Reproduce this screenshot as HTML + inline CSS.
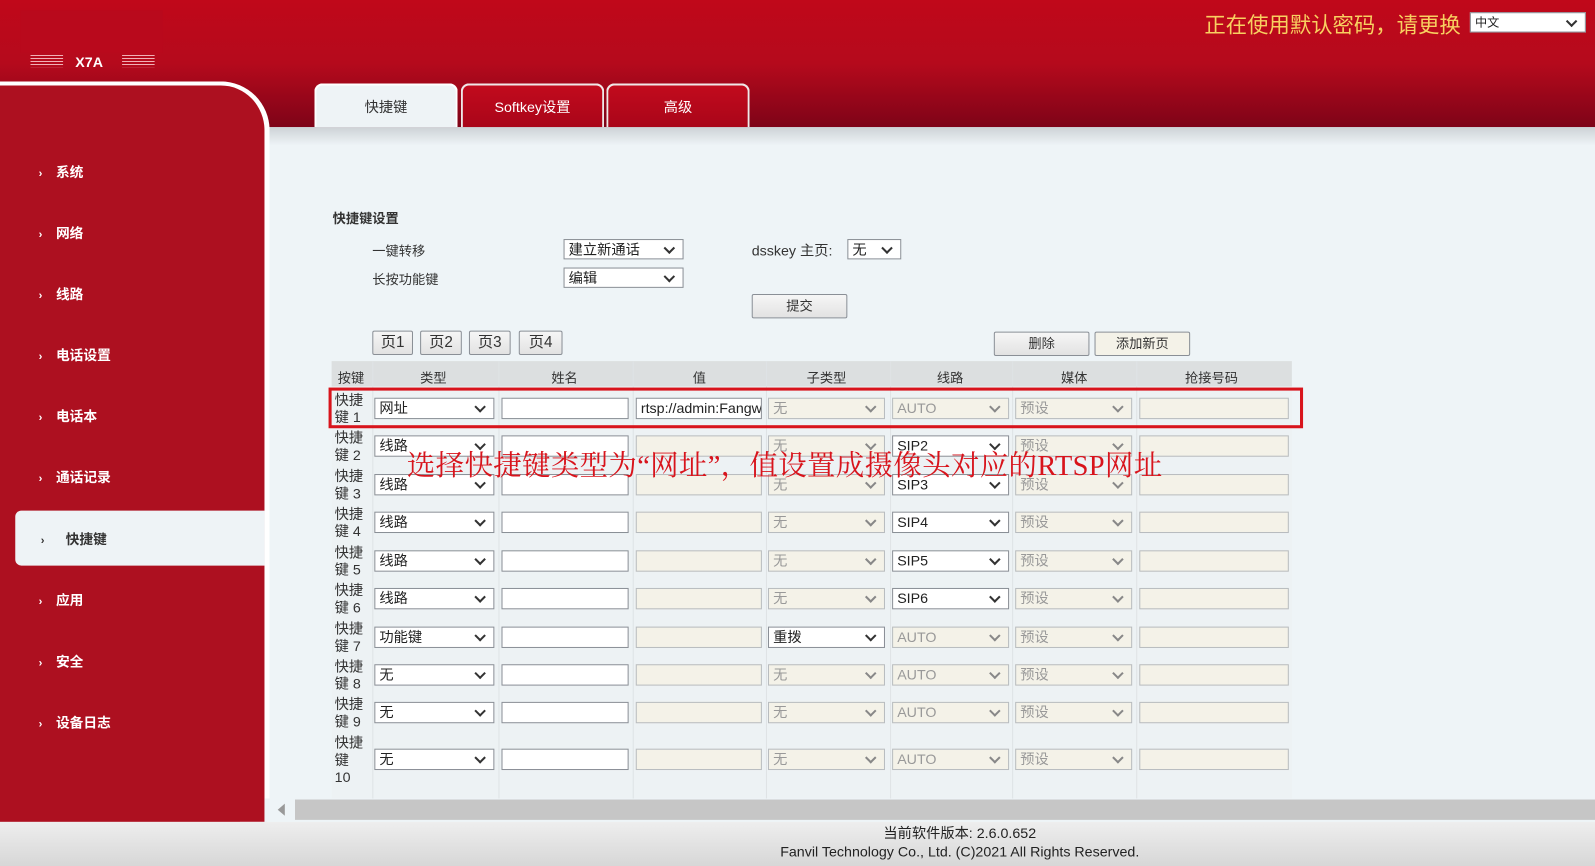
<!DOCTYPE html>
<html><head><meta charset="utf-8"><style>
*{margin:0;padding:0;box-sizing:border-box}
html,body{width:1595px;height:866px;overflow:hidden;background:#eef4f7}
#w{position:relative;width:1568px;height:852px;transform:scale(1.01722);transform-origin:0 0;font-family:"Liberation Sans","Noto Sans CJK SC",sans-serif;font-size:13px;color:#333;overflow:hidden}
.a{position:absolute}
.hdr{left:0;top:0;width:1568px;height:125px;background:linear-gradient(#c0081a 0%,#b50a1c 50%,#7e0318 100%)}
.shade{left:260px;top:125px;width:1335px;height:18px;background:linear-gradient(#cdd2d6,#eef4f7)}
.side{left:0;top:80px;width:265px;height:728px;background:#ad1020;border-top:4px solid #fff;border-right:5px solid #fff;border-top-right-radius:48px}
.nav{color:#fff;font-weight:bold;font-size:13.5px;left:38px}
.nav span{display:inline-block;width:17px;font-size:11px}
.tab{top:82px;height:43px;width:141px;border:2px solid #f0e8e8;border-bottom:none;border-radius:8px 8px 0 0;color:#fff;font-size:14px;text-align:center;line-height:42px;background:linear-gradient(#c20b1d,#a90519)}
.s,.i{position:absolute;height:21px;border:1px solid #8a8f96;background:#fff;font-size:14px;line-height:19px;padding-left:4px;color:#222;white-space:nowrap;overflow:hidden}
.s::after{content:"";position:absolute;right:9px;top:4px;width:6px;height:6px;border-right:2px solid #333;border-bottom:2px solid #333;transform:rotate(45deg)}
.d{background:#f4f2e8;border-color:#b8bcbf;color:#999}
.d::after{border-color:#888}
.btn{position:absolute;height:24px;border:1px solid #8a8f96;border-radius:2px;background:linear-gradient(#f6f6f6,#e2e2e2);font-size:13px;text-align:center;line-height:22px;color:#333}
.lab{left:329px;font-size:14px;line-height:17px;color:#333}
.vl{top:355px;width:1px;height:430px;background:#dfe3e5}
</style></head><body><div id="w">
<div class="a hdr"></div>
<div class="a" style="left:20px;top:10px;width:140px;height:42px;background:#b9091c"></div>
<div class="a" style="left:30px;top:54px;width:32px;height:12px;background:repeating-linear-gradient(#f1b0b6 0 1px,transparent 1px 3px)"></div>
<div class="a" style="left:74px;top:53px;color:#fff;font-weight:bold;font-size:14px">X7A</div>
<div class="a" style="left:120px;top:54px;width:32px;height:12px;background:repeating-linear-gradient(#f1b0b6 0 1px,transparent 1px 3px)"></div>
<div class="a" style="left:1184px;top:9px;color:#f8d060;font-size:21px">正在使用默认密码，请更换</div>
<div class="a s" style="left:1445px;top:12px;width:114px;height:20px;font-size:12px;line-height:18px">中文</div>
<div class="a shade"></div>
<div class="a tab" style="left:309px;background:#eef3f6;color:#333;border-color:#fff">快捷键</div>
<div class="a tab" style="left:453px">Softkey设置</div>
<div class="a tab" style="left:596px">高级</div>
<div class="a side"></div>
<div class="a nav" style="top:158px"><span>›</span>系统</div>
<div class="a nav" style="top:218px"><span>›</span>网络</div>
<div class="a nav" style="top:278px"><span>›</span>线路</div>
<div class="a nav" style="top:338px"><span>›</span>电话设置</div>
<div class="a nav" style="top:398px"><span>›</span>电话本</div>
<div class="a nav" style="top:458px"><span>›</span>通话记录</div>
<div class="a" style="left:15px;top:502px;width:245px;height:54px;background:#eef3f6;border-radius:6px 0 0 6px"></div>
<div class="a nav" style="top:519px;left:40px;color:#333"><span>›</span>&nbsp;&nbsp;快捷键</div>
<div class="a nav" style="top:579px"><span>›</span>应用</div>
<div class="a nav" style="top:639px"><span>›</span>安全</div>
<div class="a nav" style="top:699px"><span>›</span>设备日志</div>

<div class="a" style="left:327px;top:204px;font-weight:bold;font-size:13px">快捷键设置</div>
<div class="a" style="left:366px;top:236px">一键转移</div>
<div class="a" style="left:366px;top:264px">长按功能键</div>
<div class="s" style="left:554px;top:235px;width:118px;height:20px">建立新通话</div>
<div class="s" style="left:554px;top:263px;width:118px;height:20px">编辑</div>
<div class="a" style="left:739px;top:236px;font-size:14px">dsskey 主页:</div>
<div class="s" style="left:833px;top:235px;width:53px;height:20px">无</div>
<div class="btn" style="left:739px;top:289px;width:94px">提交</div>
<div class="btn" style="left:366px;top:325px;width:40px;font-size:15px">页1</div>
<div class="btn" style="left:413px;top:325px;width:41px;font-size:15px">页2</div>
<div class="btn" style="left:461px;top:325px;width:41px;font-size:15px">页3</div>
<div class="btn" style="left:510px;top:325px;width:43px;font-size:15px">页4</div>
<div class="btn" style="left:977px;top:326px;width:94px">删除</div>
<div class="btn" style="left:1076px;top:326px;width:94px;background:#f4f2e8">添加新页</div>

<div class="a" style="left:326px;top:355px;width:944px;height:25px;background:#dcdfe0"></div>
<div class="a" style="left:326px;top:380px;width:944px;height:405px;background:#edf2f4"></div>
<div class="a vl" style="left:366px"></div><div class="a vl" style="left:490px"></div><div class="a vl" style="left:622px"></div><div class="a vl" style="left:753px"></div><div class="a vl" style="left:875px"></div><div class="a vl" style="left:995px"></div><div class="a vl" style="left:1117px"></div>
<div class="a" style="top:361px;left:332px;font-size:13px">按键</div>
<div class="a" style="top:361px;left:413px">类型</div>
<div class="a" style="top:361px;left:542px">姓名</div>
<div class="a" style="top:361px;left:681px">值</div>
<div class="a" style="top:361px;left:793px">子类型</div>
<div class="a" style="top:361px;left:921px">线路</div>
<div class="a" style="top:361px;left:1043px">媒体</div>
<div class="a" style="top:361px;left:1165px">抢接号码</div>

<div class="a lab" style="top:385px">快捷<br>键 1</div>
<div class="s" style="left:368px;top:391px;width:118px">网址</div><div class="i" style="left:493px;top:391px;width:125px"></div><div class="i" style="left:625px;top:391px;width:124px">rtsp://admin:Fangw</div><div class="s d" style="left:755px;top:391px;width:115px">无</div><div class="s d" style="left:877px;top:391px;width:115px">AUTO</div><div class="s d" style="left:998px;top:391px;width:115px">预设</div><div class="i d" style="left:1120px;top:391px;width:147px"></div>

<div class="a lab" style="top:422px">快捷<br>键 2</div>
<div class="s" style="left:368px;top:428px;width:118px">线路</div><div class="i" style="left:493px;top:428px;width:125px"></div><div class="i d" style="left:625px;top:428px;width:124px"></div><div class="s d" style="left:755px;top:428px;width:115px">无</div><div class="s" style="left:877px;top:428px;width:115px">SIP2</div><div class="s d" style="left:998px;top:428px;width:115px">预设</div><div class="i d" style="left:1120px;top:428px;width:147px"></div>

<div class="a lab" style="top:460px">快捷<br>键 3</div>
<div class="s" style="left:368px;top:466px;width:118px">线路</div><div class="i" style="left:493px;top:466px;width:125px"></div><div class="i d" style="left:625px;top:466px;width:124px"></div><div class="s d" style="left:755px;top:466px;width:115px">无</div><div class="s" style="left:877px;top:466px;width:115px">SIP3</div><div class="s d" style="left:998px;top:466px;width:115px">预设</div><div class="i d" style="left:1120px;top:466px;width:147px"></div>

<div class="a lab" style="top:497px">快捷<br>键 4</div>
<div class="s" style="left:368px;top:503px;width:118px">线路</div><div class="i" style="left:493px;top:503px;width:125px"></div><div class="i d" style="left:625px;top:503px;width:124px"></div><div class="s d" style="left:755px;top:503px;width:115px">无</div><div class="s" style="left:877px;top:503px;width:115px">SIP4</div><div class="s d" style="left:998px;top:503px;width:115px">预设</div><div class="i d" style="left:1120px;top:503px;width:147px"></div>

<div class="a lab" style="top:535px">快捷<br>键 5</div>
<div class="s" style="left:368px;top:541px;width:118px">线路</div><div class="i" style="left:493px;top:541px;width:125px"></div><div class="i d" style="left:625px;top:541px;width:124px"></div><div class="s d" style="left:755px;top:541px;width:115px">无</div><div class="s" style="left:877px;top:541px;width:115px">SIP5</div><div class="s d" style="left:998px;top:541px;width:115px">预设</div><div class="i d" style="left:1120px;top:541px;width:147px"></div>

<div class="a lab" style="top:572px">快捷<br>键 6</div>
<div class="s" style="left:368px;top:578px;width:118px">线路</div><div class="i" style="left:493px;top:578px;width:125px"></div><div class="i d" style="left:625px;top:578px;width:124px"></div><div class="s d" style="left:755px;top:578px;width:115px">无</div><div class="s" style="left:877px;top:578px;width:115px">SIP6</div><div class="s d" style="left:998px;top:578px;width:115px">预设</div><div class="i d" style="left:1120px;top:578px;width:147px"></div>

<div class="a lab" style="top:610px">快捷<br>键 7</div>
<div class="s" style="left:368px;top:616px;width:118px">功能键</div><div class="i" style="left:493px;top:616px;width:125px"></div><div class="i d" style="left:625px;top:616px;width:124px"></div><div class="s" style="left:755px;top:616px;width:115px">重拨</div><div class="s d" style="left:877px;top:616px;width:115px">AUTO</div><div class="s d" style="left:998px;top:616px;width:115px">预设</div><div class="i d" style="left:1120px;top:616px;width:147px"></div>

<div class="a lab" style="top:647px">快捷<br>键 8</div>
<div class="s" style="left:368px;top:653px;width:118px">无</div><div class="i" style="left:493px;top:653px;width:125px"></div><div class="i d" style="left:625px;top:653px;width:124px"></div><div class="s d" style="left:755px;top:653px;width:115px">无</div><div class="s d" style="left:877px;top:653px;width:115px">AUTO</div><div class="s d" style="left:998px;top:653px;width:115px">预设</div><div class="i d" style="left:1120px;top:653px;width:147px"></div>

<div class="a lab" style="top:684px">快捷<br>键 9</div>
<div class="s" style="left:368px;top:690px;width:118px">无</div><div class="i" style="left:493px;top:690px;width:125px"></div><div class="i d" style="left:625px;top:690px;width:124px"></div><div class="s d" style="left:755px;top:690px;width:115px">无</div><div class="s d" style="left:877px;top:690px;width:115px">AUTO</div><div class="s d" style="left:998px;top:690px;width:115px">预设</div><div class="i d" style="left:1120px;top:690px;width:147px"></div>

<div class="a lab" style="top:722px">快捷<br>键<br>10</div>
<div class="s" style="left:368px;top:736px;width:118px">无</div><div class="i" style="left:493px;top:736px;width:125px"></div><div class="i d" style="left:625px;top:736px;width:124px"></div><div class="s d" style="left:755px;top:736px;width:115px">无</div><div class="s d" style="left:877px;top:736px;width:115px">AUTO</div><div class="s d" style="left:998px;top:736px;width:115px">预设</div><div class="i d" style="left:1120px;top:736px;width:147px"></div>

<div class="a" style="left:323px;top:381px;width:958px;height:40px;border:3px solid #d8141c"></div>
<div class="a" style="left:400px;top:442px;color:#d8141c;font-family:'Liberation Serif','Noto Serif CJK SC',serif;font-size:28px;letter-spacing:0.3px;line-height:34px;white-space:nowrap">选择快捷键类型为“网址”，值设置成摄像头对应的RTSP网址</div>

<div class="a" style="left:260px;top:785px;width:1335px;height:23px;background:#eef4f7"></div>
<div class="a" style="left:290px;top:786px;width:1278px;height:20px;background:#c6c6c6"></div>
<div class="a" style="left:273px;top:790px;width:0;height:0;border-top:6px solid transparent;border-bottom:6px solid transparent;border-right:7px solid #999"></div>
<div class="a" style="left:0;top:808px;width:1568px;height:58px;background:linear-gradient(#eeeeee,#cfcfcf)"></div>
<div class="a" style="left:0;top:810px;width:1887px;text-align:center;font-size:14px;line-height:18px;color:#222">当前软件版本: 2.6.0.652<br>Fanvil Technology Co., Ltd. (C)2021 All Rights Reserved.</div>
</div></body></html>
